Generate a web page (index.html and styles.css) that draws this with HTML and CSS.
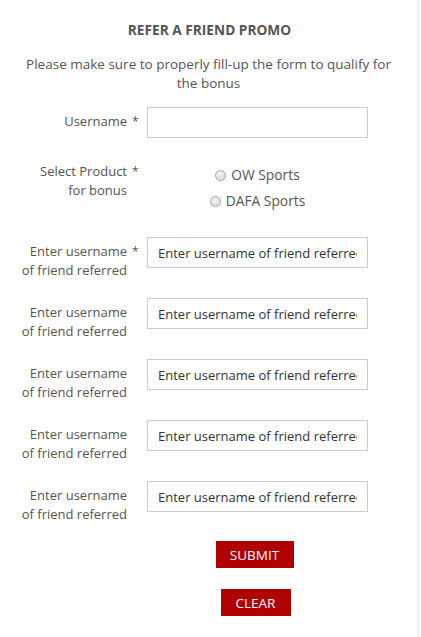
FILE: index.html
```html
<!DOCTYPE html>
<html>
<head>
<meta charset="utf-8">
<link rel="stylesheet" href="styles.css">
</head>
<body>
<div class="page">
  <h1 class="title">REFER A FRIEND PROMO</h1>
  <p class="intro">Please make sure to properly fill-up the form to qualify for the bonus</p>
  <form class="form">
    <div class="row row-user">
      <label class="lbl">Username</label><span class="star">*</span>
      <input class="field" type="text">
    </div>
    <div class="row row-radio">
      <label class="lbl">Select Product<br>for bonus</label><span class="star">*</span>
      <div class="radios">
        <label class="opt"><span class="dot"></span>OW Sports</label>
        <label class="opt"><span class="dot"></span>DAFA Sports</label>
      </div>
    </div>
    <div class="row">
      <label class="lbl">Enter username<br>of friend referred</label><span class="star">*</span>
      <input class="field" type="text" placeholder="Enter username of friend referred">
    </div>
    <div class="row">
      <label class="lbl">Enter username<br>of friend referred</label><span class="star"></span>
      <input class="field" type="text" placeholder="Enter username of friend referred">
    </div>
    <div class="row">
      <label class="lbl">Enter username<br>of friend referred</label><span class="star"></span>
      <input class="field" type="text" placeholder="Enter username of friend referred">
    </div>
    <div class="row">
      <label class="lbl">Enter username<br>of friend referred</label><span class="star"></span>
      <input class="field" type="text" placeholder="Enter username of friend referred">
    </div>
    <div class="row">
      <label class="lbl">Enter username<br>of friend referred</label><span class="star"></span>
      <input class="field" type="text" placeholder="Enter username of friend referred">
    </div>
    <div class="actions">
      <button type="button" class="btn btn-submit">SUBMIT</button>
      <button type="button" class="btn btn-clear">CLEAR</button>
    </div>
  </form>
</div>
</body>
</html>
```
FILE: styles.css
```css
html, body {
  margin: 0;
  padding: 0;
  background: #fff;
}
.page {
  width: 419px;
  height: 637px;
  overflow: hidden;
  border-right: 2px solid #ececec;
  font-family: "Open Sans", "Noto Sans", sans-serif;
  font-size: 13px;
  color: #555;
  box-sizing: border-box;
  padding-top: 20px;
}
.title {
  margin: 0;
  text-align: center;
  font-size: 13.7px;
  font-weight: 700;
  line-height: 20px;
  color: #555;
  padding-left: 2px;
}
.intro {
  margin: 15px auto 0;
  width: 380px;
  font-size: 13.5px;
  text-align: center;
  line-height: 19px;
  color: #555;
}
.form {
  margin-top: 14px;
}
.row {
  display: grid;
  grid-template-columns: 127px 20px 221px;
  align-items: start;
  margin-bottom: 18px;
}
.row-user {
  margin-bottom: 24px;
}
.row-radio {
  margin-bottom: 26px;
}
.lbl {
  grid-column: 1;
  text-align: right;
  line-height: 19px;
  padding-top: 5px;
  white-space: nowrap;
}
.row-radio .lbl {
  padding-top: 0;
}
.star {
  grid-column: 2;
  line-height: 19px;
  padding-top: 5px;
  padding-left: 5px;
  font-size: 12px;
}
.row-radio .star {
  padding-top: 0;
}
.field {
  grid-column: 3;
  width: 221px;
  height: 31px;
  box-sizing: border-box;
  border: 1px solid #ccc;
  padding: 0 10px;
  font-family: "Open Sans", "Noto Sans", sans-serif;
  font-size: 13px;
  color: #333;
  margin: 0;
  outline: none;
}
.field::placeholder {
  color: #333;
  opacity: 1;
}
.radios {
  grid-column: 3;
  display: flex;
  flex-direction: column;
  align-items: center;
  padding-top: 3px;
  gap: 6px;
}
.opt {
  display: flex;
  align-items: center;
  line-height: 20px;
  font-size: 13.8px;
  color: #555;
}
.dot {
  width: 11px;
  height: 11px;
  border-radius: 50%;
  border: 1px solid #a9a9a9;
  background: radial-gradient(circle at 40% 35%, #f4f4f4, #d4d4d4);
  margin-right: 5px;
  box-sizing: border-box;
}
.actions {
  display: flex;
  flex-direction: column;
  align-items: center;
  gap: 21px;
  width: 221px;
  margin-left: 147px;
  margin-top: -1px;
}
.btn {
  border: none;
  background: #b00000;
  color: #fff;
  font-family: "Open Sans", "Noto Sans", sans-serif;
  font-size: 13.5px;
  height: 27px;
  padding: 0;
  cursor: pointer;
}
.btn-submit {
  width: 78px;
  margin-left: -6px;
}
.btn-clear {
  width: 70px;
  margin-left: -4px;
}
```
